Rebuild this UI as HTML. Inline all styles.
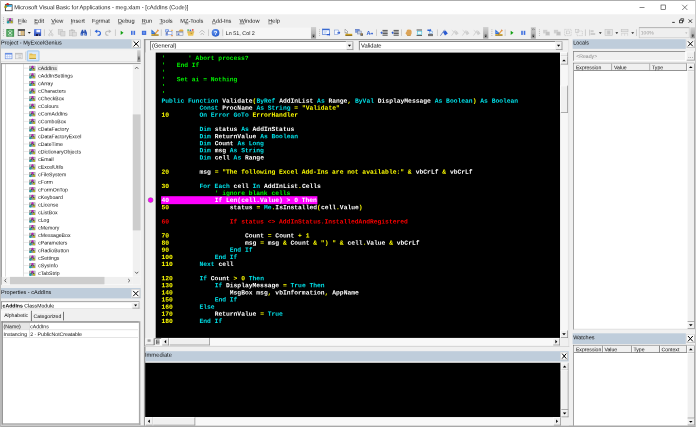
<!DOCTYPE html>
<html lang="en"><head><meta charset="utf-8"><title>Microsoft Visual Basic for Applications - meg.xlam - [cAddIns (Code)]</title>
<style>
html,body{margin:0;padding:0}
body{width:696px;height:427px;overflow:hidden;position:relative;background:#f0f0f0;font-family:"Liberation Sans",sans-serif}
#root{position:absolute;left:0;top:0;width:696px;height:427px;will-change:transform}
#root>svg{position:absolute;left:0;top:0;display:block}
</style></head>
<body>
<div id="root">
<svg width="696" height="427" viewBox="0 0 696 427">
<defs>
<g id="cls"><rect x="0.4" y="1" width="6.3" height="5" fill="#8e8e8e"/><rect x="1" y="1.5" width="1.6" height="1.6" fill="#c4c4c4"/><rect x="4.7" y="1.5" width="1.5" height="1.6" fill="#c4c4c4"/><path d="M1.9 4.4L3.6 2.2L5.1 4.4" stroke="#333" stroke-width="0.8" fill="none"/><circle cx="3.7" cy="1.9" r="1" fill="#c010c8"/><circle cx="1.6" cy="5" r="1.15" fill="#10a8b0"/><circle cx="5.3" cy="5" r="0.95" fill="#c0c010"/></g>
<linearGradient id="chev" x1="0" y1="0" x2="0" y2="1"><stop offset="0" stop-color="#d2d2d2"/><stop offset="1" stop-color="#9c9c9c"/></linearGradient>
</defs>
<rect x="0" y="0" width="696" height="14.5" fill="#fff"/>
<rect x="0" y="0" width="696" height="0.8" fill="#9a9a9a"/>
<rect x="0" y="0" width="0.8" height="427" fill="#b8b8b8"/>
<rect x="695.2" y="0" width="0.8" height="427" fill="#c8c8c8"/>
<rect x="0" y="425.7" width="696" height="1.3" fill="#a8a8a8"/>
<svg x="3.6" y="2.4" width="9.4" height="9.4" viewBox="0 0 9.4 9.4"><rect x="1.7" y="2.3" width="6.8" height="6.1" fill="#fff" stroke="#111" stroke-width="0.7"/><rect x="2.1" y="2.7" width="6" height="1.5" fill="#2f7be0"/><rect x="5.4" y="2.7" width="2.7" height="1.5" fill="#3fc0e8"/><circle cx="4" cy="1.8" r="1.25" fill="#d01818"/><circle cx="2.1" cy="4.3" r="1.25" fill="#a8a000"/><circle cx="4" cy="3.3" r="1" fill="#18a8a8"/><path d="M0.6 5l1.5-0.7" stroke="#b08000" stroke-width="0.6"/></svg>

<svg x="636" y="2" width="60" height="11" viewBox="0 0 60 11"><g stroke="#222" stroke-width="0.55" fill="none"><path d="M3.5 5.5h5"/><rect x="25" y="3" width="4.6" height="4.6"/><path d="M46.2 2.8l5.2 5.2M51.4 2.8l-5.2 5.2"/></g></svg>
<rect x="0.8" y="14.5" width="694.4" height="12.5" fill="#f0f0f0"/>
<rect x="18" y="23.65" width="3.45" height="0.5" fill="#333"/>
<rect x="34.25" y="23.65" width="3.77" height="0.5" fill="#333"/>
<rect x="51.25" y="23.65" width="3.77" height="0.5" fill="#333"/>
<rect x="70.75" y="23.65" width="1.57" height="0.5" fill="#333"/>
<rect x="95.45" y="23.65" width="3.14" height="0.5" fill="#333"/>
<rect x="118" y="23.65" width="4.08" height="0.5" fill="#333"/>
<rect x="141.75" y="23.65" width="4.08" height="0.5" fill="#333"/>
<rect x="159.5" y="23.65" width="3.45" height="0.5" fill="#333"/>
<rect x="184.96" y="23.65" width="3.45" height="0.5" fill="#333"/>
<rect x="212" y="23.65" width="3.77" height="0.5" fill="#333"/>
<rect x="239.5" y="23.65" width="5.33" height="0.5" fill="#333"/>
<rect x="268.25" y="23.65" width="4.08" height="0.5" fill="#333"/>
<svg x="668" y="17" width="28" height="9" viewBox="0 0 28 9"><g stroke="#222" stroke-width="0.7" fill="none"><path d="M4.2 5.4h2.6" stroke-width="0.9"/><rect x="11.6" y="3.2" width="2.8" height="2.6" stroke-width="0.8"/><path d="M12.8 3v-1.3h2.8v2.6h-1.2" stroke-width="0.7"/><path d="M20.6 2.4l3.4 3.4M24 2.4l-3.4 3.4" stroke-width="0.85"/></g></svg>
<rect x="0.8" y="27" width="694.4" height="12" fill="#f0f0f0"/>
<svg x="0" y="0" width="696" height="40" viewBox="0 0 696 40"><defs><linearGradient id="sav" x1="0" y1="0" x2="0" y2="1"><stop offset="0" stop-color="#6a8cf0"/><stop offset="1" stop-color="#2a4cb4"/></linearGradient><radialGradient id="hlp" cx="0.4" cy="0.35" r="0.7"><stop offset="0" stop-color="#6a9cf4"/><stop offset="1" stop-color="#2458c8"/></radialGradient></defs><rect x="3.15" y="17.40" width="0.9" height="0.8" fill="#a8a8a8"/><rect x="3.15" y="19.30" width="0.9" height="0.8" fill="#a8a8a8"/><rect x="3.15" y="21.20" width="0.9" height="0.8" fill="#a8a8a8"/><rect x="3.15" y="23.10" width="0.9" height="0.8" fill="#a8a8a8"/><use href="#cls" x="6.4" y="17.3"/><rect x="3.15" y="29.40" width="0.9" height="0.8" fill="#a8a8a8"/><rect x="3.15" y="31.30" width="0.9" height="0.8" fill="#a8a8a8"/><rect x="3.15" y="33.20" width="0.9" height="0.8" fill="#a8a8a8"/><rect x="3.15" y="35.10" width="0.9" height="0.8" fill="#a8a8a8"/><rect x="6.3" y="28.9" width="7.8" height="7.8" rx="0.5" fill="#3c9048"/><rect x="7" y="29.9" width="6.4" height="6.2" fill="#58a868"/><path d="M8.4 31.2l3.6 3.6M12 31.2l-3.6 3.6" stroke="#f4fff4" stroke-width="0.8"/><path d="M9 30.2h2.6M8.6 35.9h3.4" stroke="#e8f4e8" stroke-width="0.5"/><rect x="17.8" y="29" width="7.2" height="7" fill="#555"/><rect x="18.5" y="31" width="5.8" height="4.3" fill="#f4f4f4"/><rect x="20.6" y="31" width="3.7" height="4.3" fill="#dcb46c"/><path d="M21 33.1h3.4M22.7 30.8v4.6M18.4 33.6h2.6" stroke="#c8c8c8" stroke-width="0.4"/><path d="M27.8 32H30.8L29.3 33.7Z" fill="#222"/><rect x="34" y="29" width="7.1" height="7" rx="0.4" fill="url(#sav)"/><rect x="36.4" y="29.7" width="3.8" height="2.6" fill="#f4f6ff"/><rect x="36" y="34.1" width="3.6" height="1.9" fill="#1a1a40"/><rect x="38.2" y="34.5" width="0.9" height="1.2" fill="#c0c8e8"/><rect x="43.949999999999996" y="29.4" width="0.7" height="6.600000000000001" fill="#bdbdbd"/><path d="M49.3 29.6L52.2 34M52.3 29.6L49.4 34" stroke="#bcbcbc" stroke-width="0.7" fill="none"/><circle cx="49.4" cy="34.9" r="0.9" fill="none" stroke="#bcbcbc" stroke-width="0.6"/><circle cx="52.3" cy="34.9" r="0.9" fill="none" stroke="#bcbcbc" stroke-width="0.6"/><rect x="58.2" y="29.6" width="4.2" height="4.6" fill="#dadada" stroke="#bcbcbc" stroke-width="0.5"/><rect x="60.8" y="31.4" width="4.2" height="4.6" fill="#dadada" stroke="#bcbcbc" stroke-width="0.5"/><rect x="69.4" y="30.2" width="5.4" height="5.6" fill="#dadada" stroke="#bcbcbc" stroke-width="0.5"/><rect x="70.8" y="29.4" width="2.6" height="1.4" fill="#bcbcbc"/><rect x="72.4" y="32.2" width="4" height="3.8" fill="#dedede" stroke="#bcbcbc" stroke-width="0.5"/><path d="M80.6 35.4V33L82 29.8H83.2V35.4ZM87 35.4V33L85.6 29.8H84.4V35.4Z" fill="#2a52b0"/><rect x="82.9" y="31.4" width="1.8" height="1.6" fill="#2a52b0"/><rect x="81.3" y="33.6" width="1.1" height="1.4" fill="#8fb0f0"/><rect x="85.2" y="33.6" width="1.1" height="1.4" fill="#8fb0f0"/><rect x="90.05000000000001" y="29.4" width="0.7" height="6.600000000000001" fill="#bdbdbd"/><path d="M96 31.2H98.4A2 2 0 0 1 98.4 35.2H97.6" fill="none" stroke="#2a62d8" stroke-width="1.15"/><path d="M94.6 31.3L97.2 29.4V33.2Z" fill="#2a62d8"/><path d="M110 31.2H107.6A2 2 0 0 0 107.6 35.2H108.4" fill="none" stroke="#bcbcbc" stroke-width="1.1"/><path d="M111.4 31.3L108.8 29.4V33.2Z" fill="#bcbcbc"/><rect x="114.95" y="29.4" width="0.7" height="6.600000000000001" fill="#bdbdbd"/><path d="M120.7 30.7V35L123.5 32.85Z" fill="#12a012"/><rect x="131" y="30.8" width="1.6" height="4.1" fill="#3f70e0"/><rect x="133.5" y="30.8" width="1.6" height="4.1" fill="#3f70e0"/><rect x="141.9" y="30.8" width="4.3" height="4.1" fill="#3a68d8"/><rect x="142.8" y="31.6" width="2.4" height="2.2" fill="#6c94ec"/><g transform="translate(151,28.8)"><path d="M0.4 0.6V5.2H5.6Z" fill="#2f6fd8"/><path d="M1.6 3.2V4.3H2.9Z" fill="#bcd4f4"/><rect x="0.4" y="5.4" width="7.2" height="1.3" fill="#d8a820"/><rect x="0.4" y="6.1" width="7.2" height="0.6" fill="#7a5a10"/><path d="M3.6 4.6L6.9 0.7L7.9 1.5L4.6 5.3L3.3 5.6Z" fill="#e89a3c"/><path d="M6.5 1.1l1 0.9" stroke="#b03020" stroke-width="0.5"/><path d="M3.3 5.6l0.3-1l1 0.7z" fill="#333"/></g><rect x="160.85" y="29.4" width="0.7" height="6.600000000000001" fill="#bdbdbd"/><rect x="165.2" y="29.4" width="3.6" height="2.8" fill="#5a84e0"/><rect x="165.8" y="30.2" width="2.2" height="1.4" fill="#dce8fc"/><rect x="167.6" y="31.6" width="4.4" height="3.2" fill="#f8f8ff" stroke="#5a78c0" stroke-width="0.5"/><rect x="165.6" y="33.4" width="2.2" height="2.2" fill="#7a9ae8"/><path d="M166.4 32v2.2M166.4 33h1.4" stroke="#335" stroke-width="0.4"/><rect x="171.4" y="29.8" width="1.2" height="1.2" fill="#f0a020"/><rect x="171.4" y="35" width="1.2" height="1.2" fill="#e07020"/><rect x="176.6" y="31.4" width="6.4" height="4.2" fill="#eceef4" stroke="#7a8298" stroke-width="0.5"/><rect x="176.6" y="31.4" width="6.4" height="1.1" fill="#7a88b0"/><path d="M178.4 31.2L180 29.4H182.6L183.6 30.4L182.4 31.4Z" fill="#e8b040"/><rect x="177.6" y="33.4" width="1.8" height="1.6" fill="#5a7ad0"/><path d="M187.4 32.2H194L193.2 35.8H188.2Z" fill="#ecc458"/><path d="M187.2 31.4H194.2V32.4H187.2Z" fill="#d0a030"/><rect x="189.6" y="29.6" width="1.6" height="1.6" fill="#3a6ad8"/><rect x="192" y="29.2" width="1.5" height="1.5" fill="#d83a2a"/><rect x="187.4" y="29.4" width="1.4" height="1.4" fill="#30a040"/><path d="M190.6 33.4h1.6" stroke="#8a6010" stroke-width="0.5"/><path d="M199.4 32.6L202 30.2L204.8 32.6M200.6 35L202.2 33L204 35" stroke="#bcbcbc" stroke-width="0.9" fill="none"/><rect x="208.05" y="29.4" width="0.7" height="6.600000000000001" fill="#bdbdbd"/><circle cx="215.55" cy="32.8" r="3.85" fill="url(#hlp)"/><text x="215.55" y="35" font-family="Liberation Sans, sans-serif" font-weight="bold" font-size="6" fill="#fff" text-anchor="middle">?</text><rect x="222.45000000000002" y="29.4" width="0.7" height="6.600000000000001" fill="#bdbdbd"/><rect x="223.6" y="27.6" width="87" height="10.8" fill="#f6f6f6"/><rect x="311" y="27" width="5.100000000000023" height="11.600000000000001" fill="url(#chev)"/><path d="M312.65000000000003 35.0h1.8" stroke="#111" stroke-width="0.5"/><path d="M312.45 35.800000000000004h2.2l-1.1 1.4z" fill="#111"/><rect x="319.15000000000003" y="29.40" width="0.9" height="0.8" fill="#a8a8a8"/><rect x="319.15000000000003" y="31.30" width="0.9" height="0.8" fill="#a8a8a8"/><rect x="319.15000000000003" y="33.20" width="0.9" height="0.8" fill="#a8a8a8"/><rect x="319.15000000000003" y="35.10" width="0.9" height="0.8" fill="#a8a8a8"/><rect x="322.3" y="29" width="7" height="5.4" fill="#f4f8ff" stroke="#3a6ad0" stroke-width="0.6"/><rect x="322.3" y="29" width="7" height="1.2" fill="#3a6ad0"/><path d="M323.6 31.8h3.4M323.6 33h2.4" stroke="#8aa8e0" stroke-width="0.5"/><path d="M328 34.4h2.2v-1l1.2 1.6l-1.2 1.6v-1H328Z" fill="#2a5ad0" transform="translate(-1.2,-0.4)"/><rect x="334.6" y="30" width="3.8" height="4.6" fill="#f4f8ff" stroke="#6a8ad0" stroke-width="0.5"/><path d="M337.4 32.2h1.6v-0.9l1.3 1.5l-1.3 1.5v-0.9h-1.6Z" fill="#2a5ad0"/><path d="M345 29.2V33.2L346 32.3L346.8 34L347.6 33.6L346.8 32L348 31.9Z" fill="#fff" stroke="#555" stroke-width="0.4"/><rect x="345.4" y="33.8" width="6.8" height="1.8" fill="#d8a820"/><rect x="345.4" y="34.9" width="6.8" height="0.8" fill="#6a5010"/><rect x="355.6" y="29.2" width="3.6" height="3" fill="#7a9ae0" stroke="#3a5ab0" stroke-width="0.4"/><rect x="357.6" y="31" width="3.6" height="3" fill="#c8d0e0" stroke="#5a6a90" stroke-width="0.4"/><rect x="360.4" y="33.4" width="2.6" height="2.4" fill="#5a5a5a"/><rect x="361" y="33.6" width="1.2" height="0.9" fill="#e8a030"/><text x="366.6" y="35.2" font-family="Liberation Sans, sans-serif" font-weight="bold" font-size="5.6" fill="#2a5ad0">A</text><path d="M370.4 33.2h1.4v-0.9l1.3 1.3l-1.3 1.3v-0.9h-1.4Z" fill="#2a5ad0"/><rect x="376.04999999999995" y="29.4" width="0.7" height="6.600000000000001" fill="#bdbdbd"/><path d="M382.5 30.4h5.2M382.5 32h5.2M382.5 33.6h5.2M382.5 35.2h5.2" stroke="#2a2a2a" stroke-width="0.8"/><path d="M380.3 32.8l1.6-1.5v3z" fill="#2a5ad0"/><path d="M381.5 32.8h1.4" stroke="#2a5ad0" stroke-width="0.7"/><path d="M393.59999999999997 30.4h5.2M393.59999999999997 32h5.2M393.59999999999997 33.6h5.2M393.59999999999997 35.2h5.2" stroke="#2a2a2a" stroke-width="0.8"/><path d="M391.4 32.8l1.6-1.5v3z" fill="#2a5ad0"/><path d="M392.59999999999997 32.8h1.4" stroke="#2a5ad0" stroke-width="0.7"/><rect x="401.04999999999995" y="29.4" width="0.7" height="6.600000000000001" fill="#bdbdbd"/><path d="M405.4 33.2L406.6 31.6L407 29.8H408L408.4 29.4H409.4L409.8 29.8H410.8L411.6 31V33.6L410.6 35.6H407.2Z" fill="#dca458"/><path d="M406.8 35.2H410.8L410.4 36H407.4Z" fill="#b88838"/><path d="M416.6 30h5.4M416.6 35.4h5.4" stroke="#2a2a2a" stroke-width="0.8"/><rect x="417.4" y="31.2" width="4.4" height="3" fill="#e8fbff" stroke="#30b8d8" stroke-width="0.5"/><path d="M427.4 29.4h2.6v-0.6l1.6 1.4l-1.6 1.4v-0.6h-2.6Z" fill="#2a62d8"/><rect x="429.2" y="31.4" width="3.4" height="2.2" fill="#e8f4ff" stroke="#4a8ad8" stroke-width="0.4"/><path d="M428 34.4h5M428 35.6h5" stroke="#2a2a2a" stroke-width="0.7"/><rect x="436.95" y="29.4" width="0.7" height="6.600000000000001" fill="#bdbdbd"/><path d="M440.4 35.8L444.6 29.8" stroke="#2a4aa0" stroke-width="0.6"/><path d="M443 32L445.6 30.4L447.8 33.6L445 35.4Z" fill="#2a5ad0"/><path d="M451.59999999999997 35.6L455.4 30.2" stroke="#bcbcbc" stroke-width="0.6"/><path d="M454.2 32.2L456.59999999999997 30.8L458.59999999999997 33.6L456.0 35.2Z" fill="#cfcfcf"/><path d="M451.8 30.2l2.2 1.8" stroke="#bcbcbc" stroke-width="0.5"/><path d="M462.4 35.6L466.2 30.2" stroke="#bcbcbc" stroke-width="0.6"/><path d="M465 32.2L467.4 30.8L469.4 33.6L466.8 35.2Z" fill="#cfcfcf"/><path d="M462.6 30.2l2.2 1.8" stroke="#bcbcbc" stroke-width="0.5"/><path d="M473.5 35.6L477.3 30.2" stroke="#bcbcbc" stroke-width="0.6"/><path d="M476.1 32.2L478.5 30.8L480.5 33.6L477.90000000000003 35.2Z" fill="#cfcfcf"/><path d="M473.70000000000005 30.2l2.2 1.8" stroke="#bcbcbc" stroke-width="0.5"/><rect x="483.1" y="27" width="5.2999999999999545" height="11.600000000000001" fill="url(#chev)"/><path d="M484.85 35.0h1.8" stroke="#111" stroke-width="0.5"/><path d="M484.65 35.800000000000004h2.2l-1.1 1.4z" fill="#111"/><rect x="491.45" y="29.40" width="0.9" height="0.8" fill="#a8a8a8"/><rect x="491.45" y="31.30" width="0.9" height="0.8" fill="#a8a8a8"/><rect x="491.45" y="33.20" width="0.9" height="0.8" fill="#a8a8a8"/><rect x="491.45" y="35.10" width="0.9" height="0.8" fill="#a8a8a8"/><g transform="translate(494.9,28.8)"><path d="M0.4 0.6V5.2H5.6Z" fill="#2f6fd8"/><path d="M1.6 3.2V4.3H2.9Z" fill="#bcd4f4"/><rect x="0.4" y="5.4" width="7.2" height="1.3" fill="#d8a820"/><rect x="0.4" y="6.1" width="7.2" height="0.6" fill="#7a5a10"/><path d="M3.6 4.6L6.9 0.7L7.9 1.5L4.6 5.3L3.3 5.6Z" fill="#e89a3c"/><path d="M6.5 1.1l1 0.9" stroke="#b03020" stroke-width="0.5"/><path d="M3.3 5.6l0.3-1l1 0.7z" fill="#333"/></g><rect x="504.75" y="29.4" width="0.7" height="6.600000000000001" fill="#bdbdbd"/><path d="M510.7 30.7V35L513.5 32.85Z" fill="#12a012"/><rect x="521.2" y="30.8" width="1.6" height="4.1" fill="#3f70e0"/><rect x="523.7" y="30.8" width="1.6" height="4.1" fill="#3f70e0"/><rect x="530.8" y="27" width="5.0" height="11.600000000000001" fill="url(#chev)"/><path d="M532.4 35.0h1.8" stroke="#111" stroke-width="0.5"/><path d="M532.1999999999999 35.800000000000004h2.2l-1.1 1.4z" fill="#111"/><path d="M531.9 28.4l0.9 0.9l-0.9 0.9M533.5 28.4l0.9 0.9l-0.9 0.9" stroke="#333" stroke-width="0.45" fill="none"/><rect x="538.9499999999999" y="29.40" width="0.9" height="0.8" fill="#a8a8a8"/><rect x="538.9499999999999" y="31.30" width="0.9" height="0.8" fill="#a8a8a8"/><rect x="538.9499999999999" y="33.20" width="0.9" height="0.8" fill="#a8a8a8"/><rect x="538.9499999999999" y="35.10" width="0.9" height="0.8" fill="#a8a8a8"/><rect x="543.0999999999999" y="29.8" width="4.2" height="3.6" fill="#cfcfcf"/><rect x="545.5999999999999" y="31.8" width="4.2" height="3.6" fill="#c2c2c2" stroke="#dcdcdc" stroke-width="0.4"/><rect x="553.9" y="29.8" width="4.2" height="3.6" fill="#cfcfcf"/><rect x="556.4" y="31.8" width="4.2" height="3.6" fill="#c2c2c2" stroke="#dcdcdc" stroke-width="0.4"/><rect x="564.6" y="29.4" width="6.6" height="6.2" fill="none" stroke="#b8b8b8" stroke-width="0.5" stroke-dasharray="1.2 0.6"/><rect x="566.6" y="31" width="2.8" height="2.8" fill="none" stroke="#bcbcbc" stroke-width="0.5"/><rect x="577" y="31" width="5.4" height="4.6" fill="none" stroke="#b8b8b8" stroke-width="0.5" stroke-dasharray="1.2 0.6"/><rect x="575.4" y="29.4" width="3.4" height="3.2" fill="none" stroke="#bcbcbc" stroke-width="0.5"/><rect x="584.9499999999999" y="29.4" width="0.7" height="6.600000000000001" fill="#bdbdbd"/><path d="M589.6 29.6V35.6" stroke="#bcbcbc" stroke-width="0.7"/><rect x="590.6" y="30.2" width="3" height="2" fill="#cdcdcd"/><rect x="590.6" y="33" width="4.6" height="2" fill="#cdcdcd"/><path d="M598.9 32.2H601.7L600.3 33.900000000000006Z" fill="#222"/><rect x="605" y="29.4" width="7.4" height="6.2" fill="#e4e4e4" stroke="#bcbcbc" stroke-width="0.5"/><rect x="607.2" y="30.6" width="3" height="3.8" fill="#c8c8c8"/><path d="M615.4 32.2H618.2L616.8 33.900000000000006Z" fill="#222"/><rect x="621.2" y="29.6" width="6.8" height="2.2" fill="#e4e4e4" stroke="#bcbcbc" stroke-width="0.5"/><path d="M621.2 33.4H628M621.6 33.4V35.8M627.6 33.4V35.8M624.6 33.4V35.8" stroke="#c4c4c4" stroke-width="0.5" fill="none"/><path d="M631.3 32.2H634.1L632.7 33.900000000000006Z" fill="#222"/><rect x="636.25" y="29.4" width="0.7" height="6.600000000000001" fill="#bdbdbd"/><rect x="639.2" y="27.4" width="50" height="10.4" fill="#efefef" stroke="#c4c4c4" stroke-width="0.6"/><rect x="639.2" y="27.4" width="50" height="0.7" fill="#a8a8a8"/><path d="M685.2 32.4h2.2l-1.1 1.4z" fill="#a8a8a8"/><rect x="690.4" y="27.2" width="4.800000000000068" height="11.2" fill="url(#chev)"/><path d="M691.9 34.8h1.8" stroke="#111" stroke-width="0.5"/><path d="M691.6999999999999 35.6h2.2l-1.1 1.4z" fill="#111"/></svg>
<rect x="0.8" y="39.2" width="139.8" height="9.4" fill="#bfcddb"/>
<rect x="131.8" y="39.7" width="8.7" height="8.3" fill="#fcfcfc"/>
<rect x="131.8" y="39.7" width="0.6" height="8.3" fill="#d0d0d0"/>
<rect x="139.9" y="39.7" width="0.6" height="8.3" fill="#a8a8a8"/>
<rect x="131.8" y="39.7" width="8.1" height="0.6" fill="#d0d0d0"/>
<rect x="132.4" y="47.4" width="8.1" height="0.6" fill="#a8a8a8"/>
<svg x="131.8" y="39.7" width="8.7" height="8.3" viewBox="0 0 8.7 8.3"><path d="M1.75 1.6L6.95 6.70M6.95 1.6L1.75 6.70" stroke="#000" stroke-width="1" fill="none"/></svg>
<rect x="0.8" y="50.2" width="136.4" height="11.6" fill="#f3f3f3"/>
<rect x="0.8" y="61.2" width="136.4" height="0.6" fill="#d8d8d8"/>
<rect x="137.2" y="50.2" width="3.4" height="11.8" fill="url(#chev)"/>
<svg x="137.2" y="56" width="3.4" height="5" viewBox="0 0 3.4 5"><path d="M0.8 1.2h1.8" stroke="#111" stroke-width="0.5"/><path d="M0.6 2.4h2.2l-1.1 1.4z" fill="#111"/></svg>
<svg x="0" y="49" width="60" height="14" viewBox="0 49 60 14"><rect x="5.2" y="53.2" width="6.8" height="5.6" fill="#f4f8ff" stroke="#6088dc" stroke-width="0.6"/><rect x="5.2" y="53.2" width="6.8" height="1.3" fill="#5a84e0"/><path d="M7.4 54.5v4.3M9.7 54.5v4.3M5.2 56.6h6.8" stroke="#9ab4ec" stroke-width="0.45"/><rect x="15.4" y="53.2" width="6.8" height="5.6" fill="#ececec" stroke="#bcbcbc" stroke-width="0.6"/><rect x="15.4" y="53.2" width="6.8" height="1.2" fill="#bcbcbc"/><rect x="18.4" y="55.4" width="2.8" height="0.9" fill="#c8c8c8"/><rect x="18.4" y="57" width="2.8" height="0.9" fill="#c8c8c8"/><rect x="25.3" y="51.6" width="0.6" height="8.6" fill="#c4c4c4"/><rect x="27.2" y="50.9" width="11.8" height="10" rx="0.6" fill="#d8e8fa" stroke="#7eb4ea" stroke-width="0.7"/><path d="M29.4 53.4H32L32.8 54.2H36V58.8H29.4Z" fill="#e4bc50"/><path d="M29.4 55.2H36V58.8H29.4Z" fill="#f2d676"/><path d="M29.4 58.4H36V58.9H29.4Z" fill="#8a6a10"/></svg>

<rect x="0.8" y="63.2" width="139.8" height="221.4" fill="#fff"/>
<rect x="0.8" y="63.2" width="0.9" height="221.4" fill="#7a7a7a"/>
<rect x="0.8" y="63.2" width="139.8" height="0.9" fill="#8a8a8a"/>
<rect x="132.8" y="64" width="7.8" height="212.6" fill="#f0f0f0"/>
<rect x="132.8" y="114.4" width="7.8" height="116" fill="#cdcdcd"/>
<svg x="132.8" y="64" width="7.8" height="8" viewBox="0 0 7.8 8"><path d="M2.3 4.8l1.6-1.7l1.6 1.7" stroke="#3c3c3c" stroke-width="0.8" fill="none"/></svg>
<svg x="132.8" y="268.6" width="7.8" height="8" viewBox="0 0 7.8 8"><path d="M2.3 3.2l1.6 1.7l1.6-1.7" stroke="#3c3c3c" stroke-width="0.8" fill="none"/></svg>
<rect x="1.7" y="276.9" width="131.1" height="7.4" fill="#f0f0f0"/>
<rect x="10" y="276.9" width="94.5" height="7.4" fill="#cdcdcd"/>
<rect x="132.8" y="276.6" width="7.8" height="8" fill="#f0f0f0"/>
<svg x="1.7" y="276.9" width="8" height="7.4" viewBox="0 0 8 7.4"><path d="M4.6 2.1l-1.7 1.6l1.7 1.6" stroke="#3c3c3c" stroke-width="0.8" fill="none"/></svg>
<svg x="124.8" y="276.9" width="8" height="7.4" viewBox="0 0 8 7.4"><path d="M3.4 2.1l1.7 1.6l-1.7 1.6" stroke="#3c3c3c" stroke-width="0.8" fill="none"/></svg>
<rect x="5" y="64" width="0.6" height="212.6" fill="#c4c4c4"/>
<rect x="23.3" y="64" width="0.6" height="212.6" fill="#c8c8c8"/>
<rect x="37.1" y="64.4" width="20.7" height="7.1" fill="#ebebeb"/>
<rect x="23.6" y="67.8" width="5" height="0.6" fill="#d8d8d8"/>
<svg x="28.8" y="64.80" width="7" height="6.6" viewBox="0 0 7 6.6"><use href="#cls"/></svg>
<rect x="23.6" y="75.39" width="5" height="0.6" fill="#d8d8d8"/>
<svg x="28.8" y="72.39" width="7" height="6.6" viewBox="0 0 7 6.6"><use href="#cls"/></svg>
<rect x="23.6" y="82.98" width="5" height="0.6" fill="#d8d8d8"/>
<svg x="28.8" y="79.98" width="7" height="6.6" viewBox="0 0 7 6.6"><use href="#cls"/></svg>
<rect x="23.6" y="90.57" width="5" height="0.6" fill="#d8d8d8"/>
<svg x="28.8" y="87.57" width="7" height="6.6" viewBox="0 0 7 6.6"><use href="#cls"/></svg>
<rect x="23.6" y="98.16" width="5" height="0.6" fill="#d8d8d8"/>
<svg x="28.8" y="95.16" width="7" height="6.6" viewBox="0 0 7 6.6"><use href="#cls"/></svg>
<rect x="23.6" y="105.75" width="5" height="0.6" fill="#d8d8d8"/>
<svg x="28.8" y="102.75" width="7" height="6.6" viewBox="0 0 7 6.6"><use href="#cls"/></svg>
<rect x="23.6" y="113.34" width="5" height="0.6" fill="#d8d8d8"/>
<svg x="28.8" y="110.34" width="7" height="6.6" viewBox="0 0 7 6.6"><use href="#cls"/></svg>
<rect x="23.6" y="120.93" width="5" height="0.6" fill="#d8d8d8"/>
<svg x="28.8" y="117.93" width="7" height="6.6" viewBox="0 0 7 6.6"><use href="#cls"/></svg>
<rect x="23.6" y="128.52" width="5" height="0.6" fill="#d8d8d8"/>
<svg x="28.8" y="125.52" width="7" height="6.6" viewBox="0 0 7 6.6"><use href="#cls"/></svg>
<rect x="23.6" y="136.11" width="5" height="0.6" fill="#d8d8d8"/>
<svg x="28.8" y="133.11" width="7" height="6.6" viewBox="0 0 7 6.6"><use href="#cls"/></svg>
<rect x="23.6" y="143.7" width="5" height="0.6" fill="#d8d8d8"/>
<svg x="28.8" y="140.70" width="7" height="6.6" viewBox="0 0 7 6.6"><use href="#cls"/></svg>
<rect x="23.6" y="151.29" width="5" height="0.6" fill="#d8d8d8"/>
<svg x="28.8" y="148.29" width="7" height="6.6" viewBox="0 0 7 6.6"><use href="#cls"/></svg>
<rect x="23.6" y="158.88" width="5" height="0.6" fill="#d8d8d8"/>
<svg x="28.8" y="155.88" width="7" height="6.6" viewBox="0 0 7 6.6"><use href="#cls"/></svg>
<rect x="23.6" y="166.47" width="5" height="0.6" fill="#d8d8d8"/>
<svg x="28.8" y="163.47" width="7" height="6.6" viewBox="0 0 7 6.6"><use href="#cls"/></svg>
<rect x="23.6" y="174.06" width="5" height="0.6" fill="#d8d8d8"/>
<svg x="28.8" y="171.06" width="7" height="6.6" viewBox="0 0 7 6.6"><use href="#cls"/></svg>
<rect x="23.6" y="181.65" width="5" height="0.6" fill="#d8d8d8"/>
<svg x="28.8" y="178.65" width="7" height="6.6" viewBox="0 0 7 6.6"><use href="#cls"/></svg>
<rect x="23.6" y="189.24" width="5" height="0.6" fill="#d8d8d8"/>
<svg x="28.8" y="186.24" width="7" height="6.6" viewBox="0 0 7 6.6"><use href="#cls"/></svg>
<rect x="23.6" y="196.83" width="5" height="0.6" fill="#d8d8d8"/>
<svg x="28.8" y="193.83" width="7" height="6.6" viewBox="0 0 7 6.6"><use href="#cls"/></svg>
<rect x="23.6" y="204.42" width="5" height="0.6" fill="#d8d8d8"/>
<svg x="28.8" y="201.42" width="7" height="6.6" viewBox="0 0 7 6.6"><use href="#cls"/></svg>
<rect x="23.6" y="212.01" width="5" height="0.6" fill="#d8d8d8"/>
<svg x="28.8" y="209.01" width="7" height="6.6" viewBox="0 0 7 6.6"><use href="#cls"/></svg>
<rect x="23.6" y="219.6" width="5" height="0.6" fill="#d8d8d8"/>
<svg x="28.8" y="216.60" width="7" height="6.6" viewBox="0 0 7 6.6"><use href="#cls"/></svg>
<rect x="23.6" y="227.19" width="5" height="0.6" fill="#d8d8d8"/>
<svg x="28.8" y="224.19" width="7" height="6.6" viewBox="0 0 7 6.6"><use href="#cls"/></svg>
<rect x="23.6" y="234.78" width="5" height="0.6" fill="#d8d8d8"/>
<svg x="28.8" y="231.78" width="7" height="6.6" viewBox="0 0 7 6.6"><use href="#cls"/></svg>
<rect x="23.6" y="242.37" width="5" height="0.6" fill="#d8d8d8"/>
<svg x="28.8" y="239.37" width="7" height="6.6" viewBox="0 0 7 6.6"><use href="#cls"/></svg>
<rect x="23.6" y="249.96" width="5" height="0.6" fill="#d8d8d8"/>
<svg x="28.8" y="246.96" width="7" height="6.6" viewBox="0 0 7 6.6"><use href="#cls"/></svg>
<rect x="23.6" y="257.55" width="5" height="0.6" fill="#d8d8d8"/>
<svg x="28.8" y="254.55" width="7" height="6.6" viewBox="0 0 7 6.6"><use href="#cls"/></svg>
<rect x="23.6" y="265.14" width="5" height="0.6" fill="#d8d8d8"/>
<svg x="28.8" y="262.14" width="7" height="6.6" viewBox="0 0 7 6.6"><use href="#cls"/></svg>
<rect x="23.6" y="272.73" width="5" height="0.6" fill="#d8d8d8"/>
<svg x="28.8" y="269.73" width="7" height="6.6" viewBox="0 0 7 6.6"><use href="#cls"/></svg>
<rect x="0.8" y="288" width="139.8" height="10.4" fill="#bfcddb"/>
<rect x="131.4" y="289.3" width="8.8" height="8.5" fill="#fcfcfc"/>
<rect x="131.4" y="289.3" width="0.6" height="8.5" fill="#d0d0d0"/>
<rect x="139.6" y="289.3" width="0.6" height="8.5" fill="#a8a8a8"/>
<rect x="131.4" y="289.3" width="8.2" height="0.6" fill="#d0d0d0"/>
<rect x="132" y="297.2" width="8.2" height="0.6" fill="#a8a8a8"/>
<svg x="131.4" y="289.3" width="8.8" height="8.5" viewBox="0 0 8.8 8.5"><path d="M1.75 1.6L7.05 6.90M7.05 1.6L1.75 6.90" stroke="#000" stroke-width="1" fill="none"/></svg>
<rect x="1.2" y="301.4" width="139" height="7.6" fill="#fff"/>
<rect x="1.2" y="301.4" width="0.7" height="7.6" fill="#7a7a7a"/>
<rect x="139.5" y="301.4" width="0.7" height="7.6" fill="#dcdcdc"/>
<rect x="1.2" y="301.4" width="138.3" height="0.7" fill="#7a7a7a"/>
<rect x="1.9" y="308.3" width="138.3" height="0.7" fill="#dcdcdc"/>
<rect x="131.8" y="302.3" width="7.5" height="6.1" fill="#f0f0f0"/>
<rect x="131.8" y="302.3" width="0.6" height="6.1" fill="#f8f8f8"/>
<rect x="138.7" y="302.3" width="0.6" height="6.1" fill="#8a8a8a"/>
<rect x="131.8" y="302.3" width="6.9" height="0.6" fill="#f8f8f8"/>
<rect x="132.4" y="307.8" width="6.9" height="0.6" fill="#8a8a8a"/>
<svg x="131.8" y="302.3" width="7.5" height="6.1" viewBox="0 0 7.5 6.1"><path d="M2.3 2.3h3l-1.5 1.8z" fill="#000"/></svg>
<rect x="1.4" y="310.8" width="30.5" height="10.6" fill="#f6f6f6"/>
<rect x="1.4" y="310.8" width="0.6" height="10.6" fill="#fff"/>
<rect x="30.9" y="310.8" width="1" height="10.6" fill="#686868"/>
<rect x="1.4" y="310.8" width="29.5" height="0.6" fill="#fff"/>
<rect x="31.9" y="311.8" width="32" height="8.6" fill="#f0f0f0"/>
<rect x="63" y="311.8" width="0.9" height="8.6" fill="#686868"/>
<rect x="31.9" y="311.8" width="31.1" height="0.6" fill="#fff"/>
<rect x="1.4" y="321.2" width="139" height="103.6" fill="#fff"/>
<rect x="1.4" y="321.2" width="1.5" height="103.6" fill="#8c8c8c"/>
<rect x="138.9" y="321.2" width="1.5" height="103.6" fill="#a8a8a8"/>
<rect x="1.4" y="321.2" width="137.5" height="1.5" fill="#8c8c8c"/>
<rect x="2.9" y="423.3" width="137.5" height="1.5" fill="#a8a8a8"/>
<rect x="3.4" y="323" width="26" height="6.5" fill="#e6e6e6"/>
<rect x="3.4" y="329.6" width="134.6" height="0.5" fill="#c8c8c8"/>
<rect x="3.4" y="337.3" width="134.6" height="0.5" fill="#c8c8c8"/>
<rect x="29.5" y="323" width="0.5" height="14.5" fill="#c8c8c8"/>
<rect x="143.9" y="39.2" width="425.3" height="307.6" fill="#f0f0f0"/>
<rect x="143.9" y="39.2" width="1.6" height="307.6" fill="#989898"/>
<rect x="568.4" y="39.2" width="0.8" height="307.6" fill="#dedede"/>
<rect x="143.9" y="39.2" width="424.5" height="0.9" fill="#8c8c8c"/>
<rect x="145.5" y="346" width="423.7" height="0.8" fill="#bcbcbc"/>
<rect x="150" y="41" width="203.6" height="9.2" fill="#fff"/>
<rect x="150" y="41" width="0.8" height="9.2" fill="#6a6a6a"/>
<rect x="352.8" y="41" width="0.8" height="9.2" fill="#d0d0d0"/>
<rect x="150" y="41" width="202.8" height="0.8" fill="#6a6a6a"/>
<rect x="150.8" y="49.4" width="202.8" height="0.8" fill="#d0d0d0"/>
<rect x="345.9" y="41.7" width="7.3" height="8" fill="#f0f0f0"/>
<rect x="345.9" y="41.7" width="0.7" height="8" fill="#f8f8f8"/>
<rect x="352.5" y="41.7" width="0.7" height="8" fill="#8a8a8a"/>
<rect x="345.9" y="41.7" width="6.6" height="0.7" fill="#f8f8f8"/>
<rect x="346.6" y="49" width="6.6" height="0.7" fill="#8a8a8a"/>
<svg x="345.90" y="41.7" width="7.3" height="8" viewBox="0 0 7.3 8"><path d="M2 3h3.2l-1.6 2.1z" fill="#000"/></svg>
<rect x="358.9" y="41" width="203.8" height="9.2" fill="#fff"/>
<rect x="358.9" y="41" width="0.8" height="9.2" fill="#6a6a6a"/>
<rect x="561.9" y="41" width="0.8" height="9.2" fill="#d0d0d0"/>
<rect x="358.9" y="41" width="203" height="0.8" fill="#6a6a6a"/>
<rect x="359.7" y="49.4" width="203" height="0.8" fill="#d0d0d0"/>
<rect x="555" y="41.7" width="7.3" height="8" fill="#f0f0f0"/>
<rect x="555" y="41.7" width="0.7" height="8" fill="#f8f8f8"/>
<rect x="561.6" y="41.7" width="0.7" height="8" fill="#8a8a8a"/>
<rect x="555" y="41.7" width="6.6" height="0.7" fill="#f8f8f8"/>
<rect x="555.7" y="49" width="6.6" height="0.7" fill="#8a8a8a"/>
<svg x="555.00" y="41.7" width="7.3" height="8" viewBox="0 0 7.3 8"><path d="M2 3h3.2l-1.6 2.1z" fill="#000"/></svg>
<rect x="145.3" y="52.4" width="10.4" height="292.8" fill="#efefef"/>
<rect x="155.7" y="52.6" width="404.5" height="285.3" fill="#000"/>
<rect x="161.10" y="196.20" width="156.29" height="7.96" fill="#ff00ff"/>
<circle cx="150.6" cy="200.10" r="2.45" fill="#ff00ff" stroke="#7a2a7a" stroke-width="0.45"/>
<g font-family="Liberation Mono, monospace" font-weight="bold" font-size="6.325"><text x="161.50" y="60.00" fill="#00f000" transform="rotate(0.03 163.4 60.00)">'</text><text x="188.06" y="60.00" fill="#00f000" transform="rotate(0.03 218.4 60.00)">' Abort process?</text><text x="161.50" y="67.00" fill="#00f000" transform="rotate(0.03 163.4 67.00)">'</text><text x="176.68" y="67.00" fill="#00f000" transform="rotate(0.03 188.1 67.00)">End If</text><text x="161.50" y="74.25" fill="#00f000" transform="rotate(0.03 163.4 74.25)">'</text><text x="161.50" y="81.25" fill="#00f000" transform="rotate(0.03 163.4 81.25)">'</text><text x="176.68" y="81.25" fill="#00f000" transform="rotate(0.03 207.0 81.25)">Set ai = Nothing</text><text x="161.50" y="88.50" fill="#00f000" transform="rotate(0.03 163.4 88.50)">'</text><text x="161.50" y="95.50" fill="#00f000" transform="rotate(0.03 163.4 95.50)">'</text><text x="161.50" y="102.75" fill="#00e0e8" transform="rotate(0.03 190.0 102.75)">Public Function</text><text x="222.22" y="102.75" fill="#ffffff" transform="rotate(0.03 237.4 102.75)">Validate</text><text x="252.58" y="102.75" fill="#ffff00" transform="rotate(0.03 254.5 102.75)">(</text><text x="256.38" y="102.75" fill="#00e0e8" transform="rotate(0.03 265.9 102.75)">ByRef</text><text x="279.14" y="102.75" fill="#ffffff" transform="rotate(0.03 296.2 102.75)">AddInList</text><text x="317.10" y="102.75" fill="#00e0e8" transform="rotate(0.03 320.9 102.75)">As</text><text x="328.48" y="102.75" fill="#ffffff" transform="rotate(0.03 338.0 102.75)">Range</text><text x="347.45" y="102.75" fill="#ffff00" transform="rotate(0.03 349.4 102.75)">,</text><text x="355.04" y="102.75" fill="#00e0e8" transform="rotate(0.03 364.5 102.75)">ByVal</text><text x="377.81" y="102.75" fill="#ffffff" transform="rotate(0.03 404.4 102.75)">DisplayMessage</text><text x="434.74" y="102.75" fill="#00e0e8" transform="rotate(0.03 453.7 102.75)">As Boolean</text><text x="472.69" y="102.75" fill="#ffff00" transform="rotate(0.03 474.6 102.75)">)</text><text x="480.28" y="102.75" fill="#00e0e8" transform="rotate(0.03 499.3 102.75)">As Boolean</text><text x="199.45" y="109.75" fill="#00e0e8" transform="rotate(0.03 208.9 109.75)">Const</text><text x="222.22" y="109.75" fill="#ffffff" transform="rotate(0.03 237.4 109.75)">ProcName</text><text x="256.38" y="109.75" fill="#00e0e8" transform="rotate(0.03 273.5 109.75)">As String</text><text x="294.32" y="109.75" fill="#ffff00" transform="rotate(0.03 317.1 109.75)">= "Validate"</text><text x="161.50" y="116.75" fill="#ffff00" transform="rotate(0.03 165.3 116.75)">10</text><text x="199.45" y="116.75" fill="#00e0e8" transform="rotate(0.03 224.1 116.75)">On Error GoTo</text><text x="252.58" y="116.75" fill="#ffff00" transform="rotate(0.03 275.4 116.75)">ErrorHandler</text><text x="199.45" y="131.00" fill="#00e0e8" transform="rotate(0.03 205.1 131.00)">Dim</text><text x="214.63" y="131.00" fill="#ffffff" transform="rotate(0.03 226.0 131.00)">status</text><text x="241.19" y="131.00" fill="#00e0e8" transform="rotate(0.03 245.0 131.00)">As</text><text x="252.58" y="131.00" fill="#ffffff" transform="rotate(0.03 273.5 131.00)">AddInStatus</text><text x="199.45" y="138.25" fill="#00e0e8" transform="rotate(0.03 205.1 138.25)">Dim</text><text x="214.63" y="138.25" fill="#ffffff" transform="rotate(0.03 235.5 138.25)">ReturnValue</text><text x="260.17" y="138.25" fill="#00e0e8" transform="rotate(0.03 279.1 138.25)">As Boolean</text><text x="199.45" y="145.25" fill="#00e0e8" transform="rotate(0.03 205.1 145.25)">Dim</text><text x="214.63" y="145.25" fill="#ffffff" transform="rotate(0.03 224.1 145.25)">Count</text><text x="237.40" y="145.25" fill="#00e0e8" transform="rotate(0.03 250.7 145.25)">As Long</text><text x="199.45" y="152.25" fill="#00e0e8" transform="rotate(0.03 205.1 152.25)">Dim</text><text x="214.63" y="152.25" fill="#ffffff" transform="rotate(0.03 220.3 152.25)">msg</text><text x="229.81" y="152.25" fill="#00e0e8" transform="rotate(0.03 246.9 152.25)">As String</text><text x="199.45" y="159.50" fill="#00e0e8" transform="rotate(0.03 205.1 159.50)">Dim</text><text x="214.63" y="159.50" fill="#ffffff" transform="rotate(0.03 222.2 159.50)">cell</text><text x="233.61" y="159.50" fill="#00e0e8" transform="rotate(0.03 237.4 159.50)">As</text><text x="244.99" y="159.50" fill="#ffffff" transform="rotate(0.03 254.5 159.50)">Range</text><text x="161.50" y="173.75" fill="#ffff00" transform="rotate(0.03 165.3 173.75)">20</text><text x="199.45" y="173.75" fill="#ffffff" transform="rotate(0.03 205.1 173.75)">msg</text><text x="214.63" y="173.75" fill="#ffff00" transform="rotate(0.03 313.3 173.75)">= "The following Excel Add-Ins are not available:" &amp;</text><text x="415.76" y="173.75" fill="#ffffff" transform="rotate(0.03 427.1 173.75)">vbCrLf</text><text x="442.33" y="173.75" fill="#ffff00" transform="rotate(0.03 444.2 173.75)">&amp;</text><text x="449.92" y="173.75" fill="#ffffff" transform="rotate(0.03 461.3 173.75)">vbCrLf</text><text x="161.50" y="188.00" fill="#ffff00" transform="rotate(0.03 165.3 188.00)">30</text><text x="199.45" y="188.00" fill="#00e0e8" transform="rotate(0.03 214.6 188.00)">For Each</text><text x="233.61" y="188.00" fill="#ffffff" transform="rotate(0.03 241.2 188.00)">cell</text><text x="252.58" y="188.00" fill="#00e0e8" transform="rotate(0.03 256.4 188.00)">In</text><text x="263.97" y="188.00" fill="#ffffff" transform="rotate(0.03 281.0 188.00)">AddInList</text><text x="298.12" y="188.00" fill="#ffff00" transform="rotate(0.03 300.0 188.00)">.</text><text x="301.91" y="188.00" fill="#ffffff" transform="rotate(0.03 311.4 188.00)">Cells</text><text x="214.63" y="195.00" fill="#00f000" transform="rotate(0.03 252.6 195.00)">' ignore blank cells</text><text x="161.50" y="202.00" fill="#ffffff" transform="rotate(0.03 165.3 202.00)">40</text><text x="214.63" y="202.00" fill="#ffffff" transform="rotate(0.03 265.9 202.00)">If Len(cell.Value) &gt; 0 Then</text><text x="161.50" y="209.25" fill="#ffff00" transform="rotate(0.03 165.3 209.25)">50</text><text x="229.81" y="209.25" fill="#ffffff" transform="rotate(0.03 241.2 209.25)">status</text><text x="256.38" y="209.25" fill="#ffff00" transform="rotate(0.03 258.3 209.25)">=</text><text x="263.97" y="209.25" fill="#00e0e8" transform="rotate(0.03 267.8 209.25)">Me</text><text x="271.56" y="209.25" fill="#ffff00" transform="rotate(0.03 273.5 209.25)">.</text><text x="275.35" y="209.25" fill="#ffffff" transform="rotate(0.03 296.2 209.25)">IsInstalled</text><text x="317.10" y="209.25" fill="#ffff00" transform="rotate(0.03 319.0 209.25)">(</text><text x="320.89" y="209.25" fill="#ffffff" transform="rotate(0.03 328.5 209.25)">cell</text><text x="336.07" y="209.25" fill="#ffff00" transform="rotate(0.03 338.0 209.25)">.</text><text x="339.87" y="209.25" fill="#ffffff" transform="rotate(0.03 349.4 209.25)">Value</text><text x="358.84" y="209.25" fill="#ffff00" transform="rotate(0.03 360.7 209.25)">)</text><text x="161.50" y="223.50" fill="#ff0000" transform="rotate(0.03 165.3 223.50)">60</text><text x="229.81" y="223.50" fill="#ff0000" transform="rotate(0.03 319.0 223.50)">If status &lt;&gt; AddInStatus.InstalledAndRegistered</text><text x="161.50" y="237.50" fill="#ffff00" transform="rotate(0.03 165.3 237.50)">70</text><text x="244.99" y="237.50" fill="#ffffff" transform="rotate(0.03 254.5 237.50)">Count</text><text x="267.76" y="237.50" fill="#ffff00" transform="rotate(0.03 269.7 237.50)">=</text><text x="275.35" y="237.50" fill="#ffffff" transform="rotate(0.03 284.8 237.50)">Count</text><text x="298.12" y="237.50" fill="#ffff00" transform="rotate(0.03 303.8 237.50)">+ 1</text><text x="161.50" y="244.75" fill="#ffff00" transform="rotate(0.03 165.3 244.75)">80</text><text x="244.99" y="244.75" fill="#ffffff" transform="rotate(0.03 250.7 244.75)">msg</text><text x="260.17" y="244.75" fill="#ffff00" transform="rotate(0.03 262.1 244.75)">=</text><text x="267.76" y="244.75" fill="#ffffff" transform="rotate(0.03 273.5 244.75)">msg</text><text x="282.94" y="244.75" fill="#ffff00" transform="rotate(0.03 284.8 244.75)">&amp;</text><text x="290.53" y="244.75" fill="#ffffff" transform="rotate(0.03 300.0 244.75)">Count</text><text x="313.30" y="244.75" fill="#ffff00" transform="rotate(0.03 328.5 244.75)">&amp; ") " &amp;</text><text x="347.45" y="244.75" fill="#ffffff" transform="rotate(0.03 355.0 244.75)">cell</text><text x="362.63" y="244.75" fill="#ffff00" transform="rotate(0.03 364.5 244.75)">.</text><text x="366.43" y="244.75" fill="#ffffff" transform="rotate(0.03 375.9 244.75)">Value</text><text x="389.20" y="244.75" fill="#ffff00" transform="rotate(0.03 391.1 244.75)">&amp;</text><text x="396.79" y="244.75" fill="#ffffff" transform="rotate(0.03 408.2 244.75)">vbCrLf</text><text x="161.50" y="251.75" fill="#ffff00" transform="rotate(0.03 165.3 251.75)">90</text><text x="229.81" y="251.75" fill="#00e0e8" transform="rotate(0.03 241.2 251.75)">End If</text><text x="161.50" y="259.00" fill="#ffff00" transform="rotate(0.03 167.2 259.00)">100</text><text x="214.63" y="259.00" fill="#00e0e8" transform="rotate(0.03 226.0 259.00)">End If</text><text x="161.50" y="266.00" fill="#ffff00" transform="rotate(0.03 167.2 266.00)">110</text><text x="199.45" y="266.00" fill="#00e0e8" transform="rotate(0.03 207.0 266.00)">Next</text><text x="218.43" y="266.00" fill="#ffffff" transform="rotate(0.03 226.0 266.00)">cell</text><text x="161.50" y="280.25" fill="#ffff00" transform="rotate(0.03 167.2 280.25)">120</text><text x="199.45" y="280.25" fill="#00e0e8" transform="rotate(0.03 203.2 280.25)">If</text><text x="210.84" y="280.25" fill="#ffffff" transform="rotate(0.03 220.3 280.25)">Count</text><text x="233.61" y="280.25" fill="#ffff00" transform="rotate(0.03 239.3 280.25)">&gt; 0</text><text x="248.78" y="280.25" fill="#00e0e8" transform="rotate(0.03 256.4 280.25)">Then</text><text x="161.50" y="287.25" fill="#ffff00" transform="rotate(0.03 167.2 287.25)">130</text><text x="214.63" y="287.25" fill="#00e0e8" transform="rotate(0.03 218.4 287.25)">If</text><text x="226.01" y="287.25" fill="#ffffff" transform="rotate(0.03 252.6 287.25)">DisplayMessage</text><text x="282.94" y="287.25" fill="#ffff00" transform="rotate(0.03 284.8 287.25)">=</text><text x="290.53" y="287.25" fill="#00e0e8" transform="rotate(0.03 307.6 287.25)">True Then</text><text x="161.50" y="294.50" fill="#ffff00" transform="rotate(0.03 167.2 294.50)">140</text><text x="229.81" y="294.50" fill="#ffffff" transform="rotate(0.03 248.8 294.50)">MsgBox msg</text><text x="267.76" y="294.50" fill="#ffff00" transform="rotate(0.03 269.7 294.50)">,</text><text x="275.35" y="294.50" fill="#ffffff" transform="rotate(0.03 300.0 294.50)">vbInformation</text><text x="324.69" y="294.50" fill="#ffff00" transform="rotate(0.03 326.6 294.50)">,</text><text x="332.27" y="294.50" fill="#ffffff" transform="rotate(0.03 345.6 294.50)">AppName</text><text x="161.50" y="301.50" fill="#ffff00" transform="rotate(0.03 167.2 301.50)">150</text><text x="214.63" y="301.50" fill="#00e0e8" transform="rotate(0.03 226.0 301.50)">End If</text><text x="161.50" y="308.75" fill="#ffff00" transform="rotate(0.03 167.2 308.75)">160</text><text x="199.45" y="308.75" fill="#00e0e8" transform="rotate(0.03 207.0 308.75)">Else</text><text x="161.50" y="315.75" fill="#ffff00" transform="rotate(0.03 167.2 315.75)">170</text><text x="214.63" y="315.75" fill="#ffffff" transform="rotate(0.03 235.5 315.75)">ReturnValue</text><text x="260.17" y="315.75" fill="#ffff00" transform="rotate(0.03 262.1 315.75)">=</text><text x="267.76" y="315.75" fill="#00e0e8" transform="rotate(0.03 275.4 315.75)">True</text><text x="161.50" y="323.00" fill="#ffff00" transform="rotate(0.03 167.2 323.00)">180</text><text x="199.45" y="323.00" fill="#00e0e8" transform="rotate(0.03 210.8 323.00)">End If</text></g>
<rect x="560.2" y="52.4" width="7.6" height="285.6" fill="#f7f7f7"/>
<rect x="560.2" y="52.4" width="7.6" height="4" fill="#f0f0f0"/>
<rect x="560.2" y="52.4" width="0.6" height="4" fill="#fff"/>
<rect x="567.2" y="52.4" width="0.6" height="4" fill="#8a8a8a"/>
<rect x="560.2" y="52.4" width="7" height="0.6" fill="#fff"/>
<rect x="560.8" y="55.8" width="7" height="0.6" fill="#8a8a8a"/>
<rect x="560.2" y="56.4" width="7.6" height="8" fill="#f0f0f0"/>
<rect x="560.2" y="56.4" width="0.6" height="8" fill="#fff"/>
<rect x="567.2" y="56.4" width="0.6" height="8" fill="#7c7c7c"/>
<rect x="560.2" y="56.4" width="7" height="0.6" fill="#fff"/>
<rect x="560.8" y="63.8" width="7" height="0.6" fill="#7c7c7c"/>
<svg x="560.2" y="56.4" width="7.6" height="8" viewBox="0 0 7.6 8"><path d="M2.00 4.90h3.6l-1.8 -1.9z" fill="#000"/></svg>
<rect x="560.2" y="85.6" width="7.6" height="27.1" fill="#f0f0f0"/>
<rect x="560.2" y="85.6" width="0.6" height="27.1" fill="#fff"/>
<rect x="567.2" y="85.6" width="0.6" height="27.1" fill="#7c7c7c"/>
<rect x="560.2" y="85.6" width="7" height="0.6" fill="#fff"/>
<rect x="560.8" y="112.1" width="7" height="0.6" fill="#7c7c7c"/>
<rect x="560.2" y="330.4" width="7.6" height="7.6" fill="#f0f0f0"/>
<rect x="560.2" y="330.4" width="0.6" height="7.6" fill="#fff"/>
<rect x="567.2" y="330.4" width="0.6" height="7.6" fill="#7c7c7c"/>
<rect x="560.2" y="330.4" width="7" height="0.6" fill="#fff"/>
<rect x="560.8" y="337.4" width="7" height="0.6" fill="#7c7c7c"/>
<svg x="560.2" y="330.4" width="7.6" height="7.6" viewBox="0 0 7.6 7.6"><path d="M2.00 2.90h3.6l-1.8 1.9z" fill="#000"/></svg>
<rect x="155.7" y="338" width="404.5" height="7.3" fill="#f8f8f8"/>
<svg x="145" y="338" width="17" height="7.6" viewBox="145 338 17 7.6"><rect x="145.6" y="338.2" width="8.6" height="7" fill="#f0f0f0"/><path d="M145.8 345.2V338.3H154.2" stroke="#fff" stroke-width="0.6" fill="none"/><path d="M154 338.4V345H145.8" stroke="#6e6e6e" stroke-width="0.7" fill="none"/><path d="M147.6 340h3M147.6 341.1h3" stroke="#333" stroke-width="0.55"/><rect x="154.4" y="338.2" width="7.2" height="7" fill="#fff"/><path d="M154.7 345.2V338.4H161.6" stroke="#555" stroke-width="0.7" fill="none"/><path d="M156.4 340h3.2M156.4 341.3h3.2M156.4 342.6h3.2M156.4 343.9h3.2" stroke="#222" stroke-width="0.6"/><path d="M156.5 339.8v4.3" stroke="#222" stroke-width="0.5"/></svg>
<rect x="161.6" y="338" width="7.4" height="7.3" fill="#f0f0f0"/>
<rect x="161.6" y="338" width="0.6" height="7.3" fill="#fff"/>
<rect x="168.4" y="338" width="0.6" height="7.3" fill="#7c7c7c"/>
<rect x="161.6" y="338" width="6.8" height="0.6" fill="#fff"/>
<rect x="162.2" y="344.7" width="6.8" height="0.6" fill="#7c7c7c"/>
<svg x="161.6" y="338" width="7.4" height="7.3" viewBox="0 0 7.4 7.3"><path d="M4.60 1.85v3.6l-1.9 -1.8z" fill="#000"/></svg>
<rect x="169" y="338" width="40.6" height="7.3" fill="#f0f0f0"/>
<rect x="169" y="338" width="0.6" height="7.3" fill="#fff"/>
<rect x="209" y="338" width="0.6" height="7.3" fill="#7c7c7c"/>
<rect x="169" y="338" width="40" height="0.6" fill="#fff"/>
<rect x="169.6" y="344.7" width="40" height="0.6" fill="#7c7c7c"/>
<rect x="552.6" y="338" width="7.4" height="7.3" fill="#f0f0f0"/>
<rect x="552.6" y="338" width="0.6" height="7.3" fill="#fff"/>
<rect x="559.4" y="338" width="0.6" height="7.3" fill="#7c7c7c"/>
<rect x="552.6" y="338" width="6.8" height="0.6" fill="#fff"/>
<rect x="553.2" y="344.7" width="6.8" height="0.6" fill="#7c7c7c"/>
<svg x="552.6" y="338" width="7.4" height="7.3" viewBox="0 0 7.4 7.3"><path d="M2.80 1.85v3.6l1.9 -1.8z" fill="#000"/></svg>
<rect x="560.2" y="338" width="7.6" height="7.3" fill="#f0f0f0"/>
<rect x="143.9" y="346.6" width="424.9" height="79.2" fill="#f0f0f0"/>
<rect x="143.9" y="346.6" width="1.6" height="79.2" fill="#989898"/>
<rect x="145.5" y="351.2" width="423.3" height="10.2" fill="#bfcddb"/>
<rect x="560.4" y="352" width="7.6" height="8.2" fill="#fcfcfc"/>
<rect x="560.4" y="352" width="0.6" height="8.2" fill="#d0d0d0"/>
<rect x="567.4" y="352" width="0.6" height="8.2" fill="#a8a8a8"/>
<rect x="560.4" y="352" width="7" height="0.6" fill="#d0d0d0"/>
<rect x="561" y="359.6" width="7" height="0.6" fill="#a8a8a8"/>
<svg x="560.4" y="352" width="7.6" height="8.2" viewBox="0 0 7.6 8.2"><path d="M1.75 1.6L5.85 6.60M5.85 1.6L1.75 6.60" stroke="#000" stroke-width="1" fill="none"/></svg>
<rect x="145.2" y="362.8" width="415.6" height="54.4" fill="#000"/>
<rect x="560.8" y="362.8" width="7.6" height="54.4" fill="#f7f7f7"/>
<rect x="560.8" y="362.8" width="7.6" height="7.6" fill="#f0f0f0"/>
<rect x="560.8" y="362.8" width="0.6" height="7.6" fill="#fff"/>
<rect x="567.8" y="362.8" width="0.6" height="7.6" fill="#7c7c7c"/>
<rect x="560.8" y="362.8" width="7" height="0.6" fill="#fff"/>
<rect x="561.4" y="369.8" width="7" height="0.6" fill="#7c7c7c"/>
<svg x="560.8" y="362.8" width="7.6" height="7.6" viewBox="0 0 7.6 7.6"><path d="M2.00 4.70h3.6l-1.8 -1.9z" fill="#000"/></svg>
<rect x="560.8" y="409.6" width="7.6" height="7.6" fill="#f0f0f0"/>
<rect x="560.8" y="409.6" width="0.6" height="7.6" fill="#fff"/>
<rect x="567.8" y="409.6" width="0.6" height="7.6" fill="#7c7c7c"/>
<rect x="560.8" y="409.6" width="7" height="0.6" fill="#fff"/>
<rect x="561.4" y="416.6" width="7" height="0.6" fill="#7c7c7c"/>
<svg x="560.8" y="409.6" width="7.6" height="7.6" viewBox="0 0 7.6 7.6"><path d="M2.00 2.90h3.6l-1.8 1.9z" fill="#000"/></svg>
<rect x="560.8" y="370.4" width="7.6" height="39.2" fill="#f0f0f0"/>
<rect x="560.8" y="370.4" width="0.6" height="39.2" fill="#fff"/>
<rect x="567.8" y="370.4" width="0.6" height="39.2" fill="#7c7c7c"/>
<rect x="560.8" y="370.4" width="7" height="0.6" fill="#fff"/>
<rect x="561.4" y="409" width="7" height="0.6" fill="#7c7c7c"/>
<rect x="145.2" y="417.2" width="415.6" height="8.2" fill="#f8f8f8"/>
<rect x="145.2" y="417.2" width="7.4" height="8.2" fill="#f0f0f0"/>
<rect x="145.2" y="417.2" width="0.6" height="8.2" fill="#fff"/>
<rect x="152" y="417.2" width="0.6" height="8.2" fill="#7c7c7c"/>
<rect x="145.2" y="417.2" width="6.8" height="0.6" fill="#fff"/>
<rect x="145.8" y="424.8" width="6.8" height="0.6" fill="#7c7c7c"/>
<svg x="145.2" y="417.2" width="7.4" height="8.2" viewBox="0 0 7.4 8.2"><path d="M4.60 2.30v3.6l-1.9 -1.8z" fill="#000"/></svg>
<rect x="152.6" y="417.2" width="42.6" height="8.2" fill="#f0f0f0"/>
<rect x="152.6" y="417.2" width="0.6" height="8.2" fill="#fff"/>
<rect x="194.6" y="417.2" width="0.6" height="8.2" fill="#7c7c7c"/>
<rect x="152.6" y="417.2" width="42" height="0.6" fill="#fff"/>
<rect x="153.2" y="424.8" width="42" height="0.6" fill="#7c7c7c"/>
<rect x="553.2" y="417.2" width="7.6" height="8.2" fill="#f0f0f0"/>
<rect x="553.2" y="417.2" width="0.6" height="8.2" fill="#fff"/>
<rect x="560.2" y="417.2" width="0.6" height="8.2" fill="#7c7c7c"/>
<rect x="553.2" y="417.2" width="7" height="0.6" fill="#fff"/>
<rect x="553.8" y="424.8" width="7" height="0.6" fill="#7c7c7c"/>
<svg x="553.2" y="417.2" width="7.6" height="8.2" viewBox="0 0 7.6 8.2"><path d="M2.90 2.30v3.6l1.9 -1.8z" fill="#000"/></svg>
<rect x="572.6" y="39.2" width="113.2" height="9.6" fill="#bfcddb"/>
<rect x="686.2" y="39.7" width="8.4" height="8.2" fill="#fcfcfc"/>
<rect x="686.2" y="39.7" width="0.6" height="8.2" fill="#d0d0d0"/>
<rect x="694" y="39.7" width="0.6" height="8.2" fill="#a8a8a8"/>
<rect x="686.2" y="39.7" width="7.8" height="0.6" fill="#d0d0d0"/>
<rect x="686.8" y="47.3" width="7.8" height="0.6" fill="#a8a8a8"/>
<svg x="686.2" y="39.7" width="8.4" height="8.2" viewBox="0 0 8.4 8.2"><path d="M1.75 1.6L6.65 6.60M6.65 1.6L1.75 6.60" stroke="#000" stroke-width="1" fill="none"/></svg>
<rect x="573" y="51.1" width="113" height="9.8" fill="#f0f0f0"/>
<rect x="573" y="51.1" width="0.8" height="9.8" fill="#8a8a8a"/>
<rect x="685.2" y="51.1" width="0.8" height="9.8" fill="#fff"/>
<rect x="573" y="51.1" width="112.2" height="0.8" fill="#808080"/>
<rect x="573.8" y="60.1" width="112.2" height="0.8" fill="#fff"/>
<rect x="686.2" y="51.6" width="8.4" height="8.8" fill="#f0f0f0"/>
<rect x="686.2" y="51.6" width="0.6" height="8.8" fill="#fff"/>
<rect x="694" y="51.6" width="0.6" height="8.8" fill="#7c7c7c"/>
<rect x="686.2" y="51.6" width="7.8" height="0.6" fill="#fff"/>
<rect x="686.8" y="59.8" width="7.8" height="0.6" fill="#7c7c7c"/>
<rect x="573" y="62.8" width="122.2" height="266.8" fill="#fff"/>
<rect x="573" y="62.8" width="0.8" height="266.8" fill="#8c8c8c"/>
<rect x="694.4" y="62.8" width="0.8" height="266.8" fill="#d8d8d8"/>
<rect x="573" y="62.8" width="121.4" height="0.8" fill="#7c7c7c"/>
<rect x="573.8" y="328.8" width="121.4" height="0.8" fill="#d8d8d8"/>
<rect x="573.9" y="63.7" width="113.1" height="7.2" fill="#f0f0f0"/>
<rect x="573.9" y="70.1" width="113.1" height="0.8" fill="#7c7c7c"/>
<rect x="611.5" y="63.7" width="0.8" height="6.6" fill="#707070"/>
<rect x="612.3" y="63.7" width="0.6" height="6.4" fill="#fff"/>
<rect x="649.6" y="63.7" width="0.8" height="6.6" fill="#707070"/>
<rect x="650.4" y="63.7" width="0.6" height="6.4" fill="#fff"/>
<rect x="686.4" y="63.7" width="0.8" height="6.6" fill="#707070"/>
<rect x="687.2" y="63.7" width="0.6" height="6.4" fill="#fff"/>
<rect x="687" y="63.7" width="7.6" height="265" fill="#f0f0f0"/>
<rect x="687" y="63.7" width="7.6" height="7" fill="#f0f0f0"/>
<rect x="687" y="63.7" width="0.6" height="7" fill="#fff"/>
<rect x="694" y="63.7" width="0.6" height="7" fill="#7c7c7c"/>
<rect x="687" y="63.7" width="7" height="0.6" fill="#fff"/>
<rect x="687.6" y="70.1" width="7" height="0.6" fill="#7c7c7c"/>
<svg x="687" y="63.699999999999996" width="7.6" height="7" viewBox="0 0 7.6 7"><path d="M2.00 4.40h3.6l-1.8 -1.9z" fill="#000"/></svg>
<rect x="687" y="321.7" width="7.6" height="7" fill="#f0f0f0"/>
<rect x="687" y="321.7" width="0.6" height="7" fill="#fff"/>
<rect x="694" y="321.7" width="0.6" height="7" fill="#7c7c7c"/>
<rect x="687" y="321.7" width="7" height="0.6" fill="#fff"/>
<rect x="687.6" y="328.1" width="7" height="0.6" fill="#7c7c7c"/>
<svg x="687" y="321.70000000000005" width="7.6" height="7" viewBox="0 0 7.6 7"><path d="M2.00 2.60h3.6l-1.8 1.9z" fill="#000"/></svg>
<rect x="687" y="70.7" width="7.6" height="251" fill="#f0f0f0"/>
<rect x="687" y="70.7" width="0.6" height="251" fill="#fff"/>
<rect x="694" y="70.7" width="0.6" height="251" fill="#7c7c7c"/>
<rect x="687" y="70.7" width="7" height="0.6" fill="#fff"/>
<rect x="687.6" y="321.1" width="7" height="0.6" fill="#7c7c7c"/>
<rect x="572.6" y="333.3" width="113.2" height="10.7" fill="#bfcddb"/>
<rect x="686.2" y="334.4" width="8.4" height="8.6" fill="#fcfcfc"/>
<rect x="686.2" y="334.4" width="0.6" height="8.6" fill="#d0d0d0"/>
<rect x="694" y="334.4" width="0.6" height="8.6" fill="#a8a8a8"/>
<rect x="686.2" y="334.4" width="7.8" height="0.6" fill="#d0d0d0"/>
<rect x="686.8" y="342.4" width="7.8" height="0.6" fill="#a8a8a8"/>
<svg x="686.2" y="334.4" width="8.4" height="8.6" viewBox="0 0 8.4 8.6"><path d="M1.75 1.6L6.65 7.00M6.65 1.6L1.75 7.00" stroke="#000" stroke-width="1" fill="none"/></svg>
<rect x="573" y="344.9" width="122.2" height="81.3" fill="#fff"/>
<rect x="573" y="344.9" width="0.8" height="81.3" fill="#8c8c8c"/>
<rect x="694.4" y="344.9" width="0.8" height="81.3" fill="#d8d8d8"/>
<rect x="573" y="344.9" width="121.4" height="0.8" fill="#7c7c7c"/>
<rect x="573.8" y="425.4" width="121.4" height="0.8" fill="#d8d8d8"/>
<rect x="573.9" y="345.8" width="113.1" height="7.2" fill="#f0f0f0"/>
<rect x="573.9" y="352.2" width="113.1" height="0.8" fill="#7c7c7c"/>
<rect x="602" y="345.8" width="0.8" height="6.6" fill="#707070"/>
<rect x="602.8" y="345.8" width="0.6" height="6.4" fill="#fff"/>
<rect x="631" y="345.8" width="0.8" height="6.6" fill="#707070"/>
<rect x="631.8" y="345.8" width="0.6" height="6.4" fill="#fff"/>
<rect x="659.2" y="345.8" width="0.8" height="6.6" fill="#707070"/>
<rect x="660" y="345.8" width="0.6" height="6.4" fill="#fff"/>
<rect x="686.4" y="345.8" width="0.8" height="6.6" fill="#707070"/>
<rect x="687.2" y="345.8" width="0.6" height="6.4" fill="#fff"/>
<rect x="687" y="345.8" width="7.6" height="79.5" fill="#f0f0f0"/>
<rect x="687" y="345.8" width="7.6" height="7" fill="#f0f0f0"/>
<rect x="687" y="345.8" width="0.6" height="7" fill="#fff"/>
<rect x="694" y="345.8" width="0.6" height="7" fill="#7c7c7c"/>
<rect x="687" y="345.8" width="7" height="0.6" fill="#fff"/>
<rect x="687.6" y="352.2" width="7" height="0.6" fill="#7c7c7c"/>
<svg x="687" y="345.79999999999995" width="7.6" height="7" viewBox="0 0 7.6 7"><path d="M2.00 4.40h3.6l-1.8 -1.9z" fill="#000"/></svg>
<rect x="687" y="418.3" width="7.6" height="7" fill="#f0f0f0"/>
<rect x="687" y="418.3" width="0.6" height="7" fill="#fff"/>
<rect x="694" y="418.3" width="0.6" height="7" fill="#7c7c7c"/>
<rect x="687" y="418.3" width="7" height="0.6" fill="#fff"/>
<rect x="687.6" y="424.7" width="7" height="0.6" fill="#7c7c7c"/>
<svg x="687" y="418.3" width="7.6" height="7" viewBox="0 0 7.6 7"><path d="M2.00 2.60h3.6l-1.8 1.9z" fill="#000"/></svg>
<rect x="687" y="352.8" width="7.6" height="65.5" fill="#f0f0f0"/>
<rect x="687" y="352.8" width="0.6" height="65.5" fill="#fff"/>
<rect x="694" y="352.8" width="0.6" height="65.5" fill="#7c7c7c"/>
<rect x="687" y="352.8" width="7" height="0.6" fill="#fff"/>
<rect x="687.6" y="417.7" width="7" height="0.6" fill="#7c7c7c"/>
<rect x="0" y="425.7" width="696" height="1.3" fill="#a8a8a8"/>
<rect x="0" y="0" width="0.8" height="427" fill="#b8b8b8"/>
<rect x="695.2" y="0" width="0.8" height="427" fill="#c8c8c8"/>
<defs><clipPath id="cp0"><rect x="2.6" y="330.00" width="26.6" height="9"/></clipPath></defs><g font-family="Liberation Sans, sans-serif"><text x="14.2" y="9.25" font-size="5.73" fill="#1a1a1a" transform="rotate(0.03 113.0 9.25)">Microsoft Visual Basic for Applications - meg.xlam - [cAddIns (Code)]</text>
<text x="18" y="22.75" font-size="5.65" fill="#1a1a1a" transform="rotate(0.03 23.6 22.75)">File</text>
<text x="34.25" y="22.75" font-size="5.65" fill="#1a1a1a" transform="rotate(0.03 39.9 22.75)">Edit</text>
<text x="51.25" y="22.75" font-size="5.65" fill="#1a1a1a" transform="rotate(0.03 56.9 22.75)">View</text>
<text x="70.75" y="22.75" font-size="5.65" fill="#1a1a1a" transform="rotate(0.03 79.2 22.75)">Insert</text>
<text x="92" y="22.75" font-size="5.65" fill="#1a1a1a" transform="rotate(0.03 100.5 22.75)">Format</text>
<text x="118" y="22.75" font-size="5.65" fill="#1a1a1a" transform="rotate(0.03 125.1 22.75)">Debug</text>
<text x="141.75" y="22.75" font-size="5.65" fill="#1a1a1a" transform="rotate(0.03 146.0 22.75)">Run</text>
<text x="159.5" y="22.75" font-size="5.65" fill="#1a1a1a" transform="rotate(0.03 166.6 22.75)">Tools</text>
<text x="180.25" y="22.75" font-size="5.65" fill="#1a1a1a" transform="rotate(0.03 191.6 22.75)">MZ-Tools</text>
<text x="212" y="22.75" font-size="5.65" fill="#1a1a1a" transform="rotate(0.03 221.9 22.75)">Add-Ins</text>
<text x="239.5" y="22.75" font-size="5.65" fill="#1a1a1a" transform="rotate(0.03 248.0 22.75)">Window</text>
<text x="268.25" y="22.75" font-size="5.65" fill="#1a1a1a" transform="rotate(0.03 273.9 22.75)">Help</text>
<text x="225.8" y="35.00" font-size="5.4" fill="#222" transform="rotate(0.03 242.0 35.00)">Ln 51, Col 2</text>
<text x="640.8" y="34.50" font-size="5.05" fill="#9a9a9a" transform="rotate(0.03 645.8 34.50)">100%</text>
<text x="1" y="44.50" font-size="5.55" fill="#111" transform="rotate(0.03 32.9 44.50)">Project - MyExcelGenius</text>
<text x="38.2" y="70.00" font-size="5.15" fill="#111" transform="rotate(0.03 47.2 70.00)">cAddIns</text>
<text x="38.2" y="77.50" font-size="5.15" fill="#111" transform="rotate(0.03 56.2 77.50)">cAddInSettings</text>
<text x="38.2" y="85.25" font-size="5.15" fill="#111" transform="rotate(0.03 45.9 85.25)">cArray</text>
<text x="38.2" y="92.75" font-size="5.15" fill="#111" transform="rotate(0.03 52.4 92.75)">cCharacters</text>
<text x="38.2" y="100.25" font-size="5.15" fill="#111" transform="rotate(0.03 49.8 100.25)">cCheckBox</text>
<text x="38.2" y="108.00" font-size="5.15" fill="#111" transform="rotate(0.03 48.5 108.00)">cColours</text>
<text x="38.2" y="115.50" font-size="5.15" fill="#111" transform="rotate(0.03 51.1 115.50)">cComAddIns</text>
<text x="38.2" y="123.25" font-size="5.15" fill="#111" transform="rotate(0.03 49.8 123.25)">cComboBox</text>
<text x="38.2" y="130.75" font-size="5.15" fill="#111" transform="rotate(0.03 53.7 130.75)">cDataFactory</text>
<text x="38.2" y="138.25" font-size="5.15" fill="#111" transform="rotate(0.03 60.1 138.25)">cDataFactoryExcel</text>
<text x="38.2" y="146.00" font-size="5.15" fill="#111" transform="rotate(0.03 49.8 146.00)">cDateTime</text>
<text x="38.2" y="153.50" font-size="5.15" fill="#111" transform="rotate(0.03 61.4 153.50)">cDictionaryObjects</text>
<text x="38.2" y="161.00" font-size="5.15" fill="#111" transform="rotate(0.03 45.9 161.00)">cEmail</text>
<text x="38.2" y="168.75" font-size="5.15" fill="#111" transform="rotate(0.03 52.4 168.75)">cExcelUtils</text>
<text x="38.2" y="176.25" font-size="5.15" fill="#111" transform="rotate(0.03 52.4 176.25)">cFileSystem</text>
<text x="38.2" y="183.75" font-size="5.15" fill="#111" transform="rotate(0.03 44.6 183.75)">cForm</text>
<text x="38.2" y="191.50" font-size="5.15" fill="#111" transform="rotate(0.03 51.1 191.50)">cFormOnTop</text>
<text x="38.2" y="199.00" font-size="5.15" fill="#111" transform="rotate(0.03 49.8 199.00)">cKeyboard</text>
<text x="38.2" y="206.50" font-size="5.15" fill="#111" transform="rotate(0.03 48.5 206.50)">cLicense</text>
<text x="38.2" y="214.25" font-size="5.15" fill="#111" transform="rotate(0.03 48.5 214.25)">cListBox</text>
<text x="38.2" y="221.75" font-size="5.15" fill="#111" transform="rotate(0.03 43.4 221.75)">cLog</text>
<text x="38.2" y="229.50" font-size="5.15" fill="#111" transform="rotate(0.03 47.2 229.50)">cMemory</text>
<text x="38.2" y="237.00" font-size="5.15" fill="#111" transform="rotate(0.03 52.4 237.00)">cMessageBox</text>
<text x="38.2" y="244.50" font-size="5.15" fill="#111" transform="rotate(0.03 52.4 244.50)">cParameters</text>
<text x="38.2" y="252.25" font-size="5.15" fill="#111" transform="rotate(0.03 53.7 252.25)">cRadioButton</text>
<text x="38.2" y="259.75" font-size="5.15" fill="#111" transform="rotate(0.03 49.8 259.75)">cSettings</text>
<text x="38.2" y="267.25" font-size="5.15" fill="#111" transform="rotate(0.03 48.5 267.25)">cSysInfo</text>
<text x="38.2" y="275.00" font-size="5.15" fill="#111" transform="rotate(0.03 49.8 275.00)">cTabStrip</text>
<text x="1" y="294.00" font-size="5.55" fill="#111" transform="rotate(0.03 28.8 294.00)">Properties - cAddIns</text>
<text x="2.6" y="307.50" font-size="5.15" fill="#000" transform="rotate(0.03 27.1 307.50)"><tspan font-weight="bold">cAddIns</tspan> ClassModule</text>
<text x="4.2" y="317.00" font-size="5.15" fill="#111" transform="rotate(0.03 17.1 317.00)">Alphabetic</text>
<text x="33.6" y="318.00" font-size="5.15" fill="#111" transform="rotate(0.03 47.8 318.00)">Categorized</text>
<text x="3.6" y="328.25" font-size="5.15" fill="#111" transform="rotate(0.03 11.3 328.25)">(Name)</text>
<text x="30.2" y="328.25" font-size="5.15" fill="#111" transform="rotate(0.03 39.2 328.25)">cAddIns</text>
<g clip-path="url(#cp0)"><text x="3.6" y="336.00" font-size="5.15" fill="#111" transform="rotate(0.03 16.5 336.00)">Instancing</text></g>
<text x="30.2" y="336.00" font-size="5.15" fill="#111" transform="rotate(0.03 58.5 336.00)">2 - PublicNotCreatable</text>
<text x="151.9" y="47.50" font-size="5.8" fill="#000" transform="rotate(0.03 165.0 47.50)">(General)</text>
<text x="361.0" y="47.50" font-size="5.8" fill="#000" transform="rotate(0.03 372.6 47.50)">Validate</text>
<text x="144.9" y="356.75" font-size="5.8" fill="#111" transform="rotate(0.03 158.0 356.75)">Immediate</text>
<text x="573.2" y="44.50" font-size="5.45" fill="#111" transform="rotate(0.03 581.4 44.50)">Locals</text>
<text x="576.3" y="58.00" font-size="5.15" fill="#8a8a8a" transform="rotate(0.03 585.3 58.00)">&lt;Ready&gt;</text>
<text x="688.1" y="57.75" font-size="6.4" fill="#6e6e6e" transform="rotate(0.03 692.9 57.75)">...</text>
<text x="575.9" y="69.25" font-size="5.15" fill="#111" transform="rotate(0.03 588.8 69.25)">Expression</text>
<text x="613.9" y="69.25" font-size="5.15" fill="#111" transform="rotate(0.03 620.3 69.25)">Value</text>
<text x="652" y="69.25" font-size="5.15" fill="#111" transform="rotate(0.03 657.1 69.25)">Type</text>
<text x="573.2" y="339.25" font-size="5.55" fill="#111" transform="rotate(0.03 582.9 339.25)">Watches</text>
<text x="575.9" y="351.25" font-size="5.15" fill="#111" transform="rotate(0.03 588.8 351.25)">Expression</text>
<text x="604.4" y="351.25" font-size="5.15" fill="#111" transform="rotate(0.03 610.8 351.25)">Value</text>
<text x="633.4" y="351.25" font-size="5.15" fill="#111" transform="rotate(0.03 638.5 351.25)">Type</text>
<text x="661.6" y="351.25" font-size="5.15" fill="#111" transform="rotate(0.03 670.6 351.25)">Context</text></g>
</svg>
</div>
</body></html>
